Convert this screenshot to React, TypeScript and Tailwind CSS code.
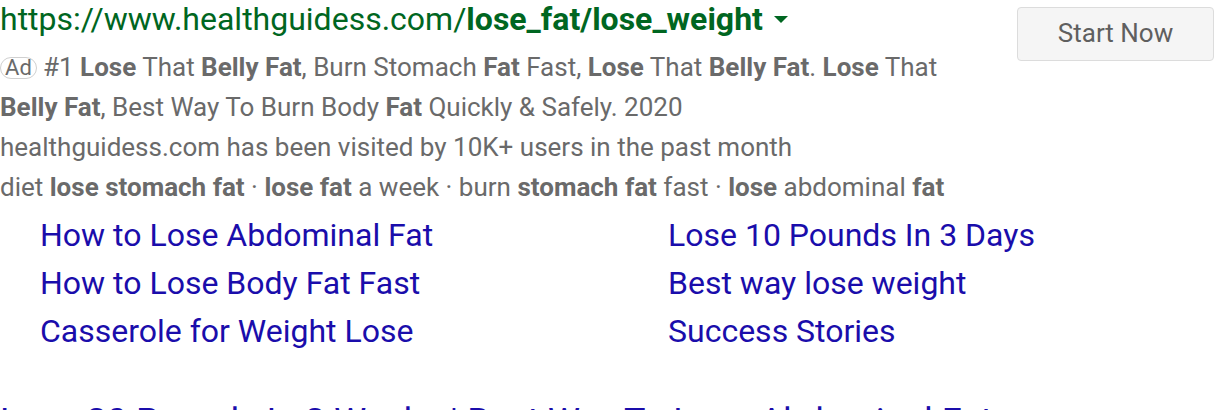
import React from "react";

const font = { fontFamily: "Roboto, 'Liberation Sans', Arial, sans-serif" };

type Part = { t: string; b?: boolean };

const Desc = ({ parts }: { parts: Part[] }) => (
  <>
    {parts.map((p, i) =>
      p.b ? (
        <b key={i} className="font-bold">
          {p.t}
        </b>
      ) : (
        <span key={i}>{p.t}</span>
      )
    )}
  </>
);

const leftLinks = [
  "How to Lose Abdominal Fat",
  "How to Lose Body Fat Fast",
  "Casserole for Weight Lose",
];
const rightLinks = [
  "Lose 10 Pounds In 3 Days",
  "Best way lose weight",
  "Success Stories",
];

export default function App() {
  return (
    <div className="w-[1216px] h-[410px] overflow-hidden bg-white" style={font}>
      <div className="flex items-start justify-between">
        <div>
          <div className="flex items-center text-[32px] leading-[38px] text-[#006621]">
            <span>https://www.healthguidess.com/</span>
            <span className="font-bold">lose_fat/lose_weight</span>
            <svg width="14" height="7" viewBox="0 0 14 7" className="ml-[11px] mt-[1px]">
              <path d="M0 0 L14 0 L7 7 Z" fill="#006621" />
            </svg>
          </div>
          <div className="mt-[9px] text-[26px] leading-[40px] text-[#6a6a6a]">
            <div className="flex items-center">
              <span className="inline-flex items-center justify-center h-[22px] w-[37px] rounded-[11px] border border-[#d0d0d0] text-[22px] leading-none text-[#6a6a6a] mr-[6px] mt-[1px]">
                Ad
              </span>
              <span>
                <Desc
                  parts={[
                    { t: "#1 " },
                    { t: "Lose", b: true },
                    { t: " That " },
                    { t: "Belly Fat", b: true },
                    { t: ", Burn Stomach " },
                    { t: "Fat", b: true },
                    { t: " Fast, " },
                    { t: "Lose", b: true },
                    { t: " That " },
                    { t: "Belly Fat", b: true },
                    { t: ". " },
                    { t: "Lose", b: true },
                    { t: " That" },
                  ]}
                />
              </span>
            </div>
            <div>
              <Desc
                parts={[
                  { t: "Belly Fat", b: true },
                  { t: ", Best Way To Burn Body " },
                  { t: "Fat", b: true },
                  { t: " Quickly & Safely. 2020" },
                ]}
              />
            </div>
            <div>healthguidess.com has been visited by 10K+ users in the past month</div>
            <div>
              <Desc
                parts={[
                  { t: "diet " },
                  { t: "lose stomach fat", b: true },
                  { t: " · " },
                  { t: "lose fat", b: true },
                  { t: " a week · burn " },
                  { t: "stomach fat", b: true },
                  { t: " fast · " },
                  { t: "lose", b: true },
                  { t: " abdominal " },
                  { t: "fat", b: true },
                ]}
              />
            </div>
          </div>
        </div>
        <button className="mt-[7px] mr-[2px] w-[197px] h-[54px] rounded-[4px] border border-[#dcdcdc] bg-[#f5f5f5] text-[26px] text-[#5f5f5f] pb-[1px]">
          Start Now
        </button>
      </div>

      <div className="mt-[4px] pl-[40px] grid grid-cols-[628px_1fr] text-[32px] leading-[48px] text-[#1a0dab]">
        <div className="flex flex-col">
          {leftLinks.map((l) => (
            <a key={l} className="cursor-pointer">
              {l}
            </a>
          ))}
        </div>
        <div className="flex flex-col">
          {rightLinks.map((l) => (
            <a key={l} className="cursor-pointer">
              {l}
            </a>
          ))}
        </div>
      </div>

      <div className="mt-[43px] text-[36px] leading-[48px] text-[#1a0dab] whitespace-nowrap">
        Lose 20 Pounds In 2 Weeks | Best Way To Lose Abdominal Fat
      </div>
    </div>
  );
}
